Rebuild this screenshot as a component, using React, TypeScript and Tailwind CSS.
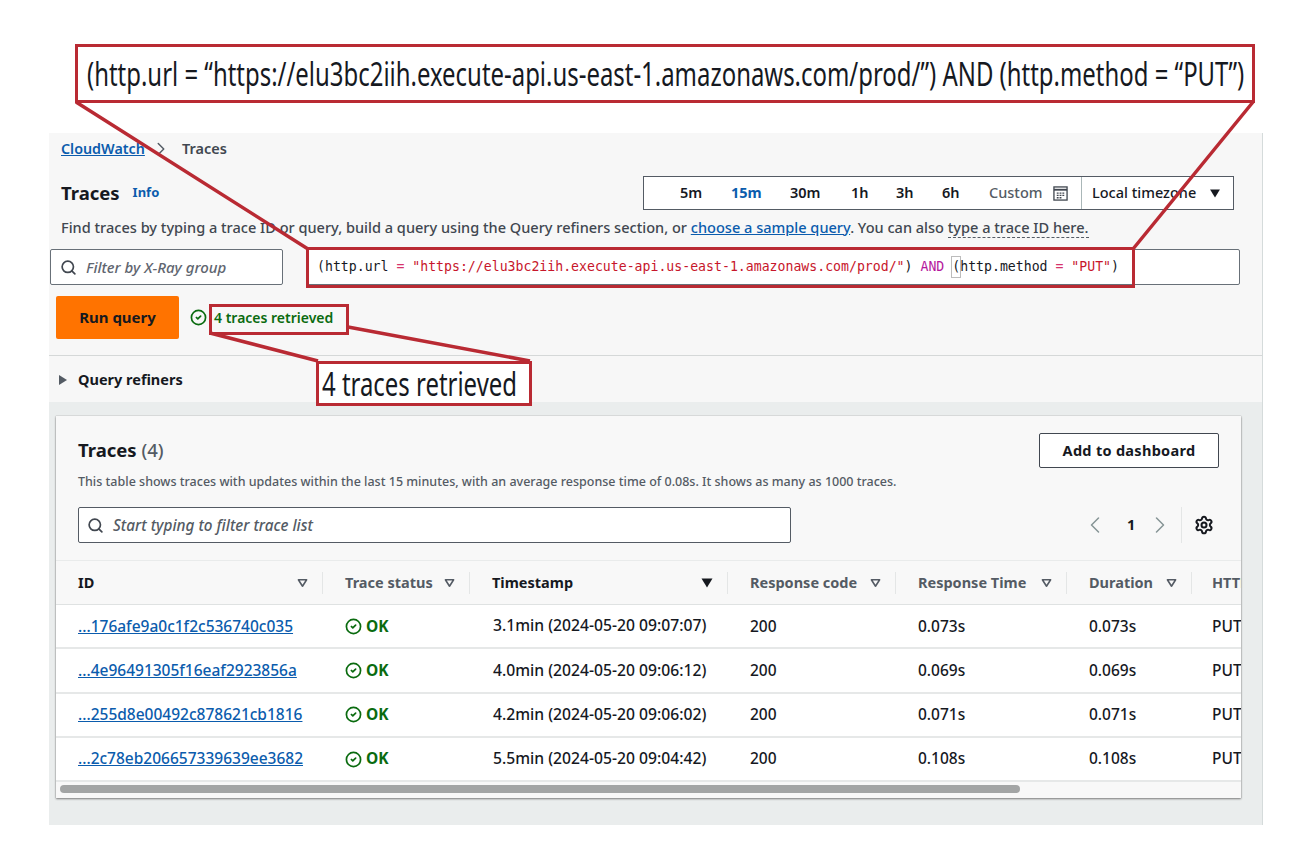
import { Search, ChevronRight, ChevronLeft, Settings, CircleCheck } from 'lucide-react'

const rows = [
  { id: '...176afe9a0c1f2c536740c035', ts: '3.1min (2024-05-20 09:07:07)', time: '0.073s' },
  { id: '...4e96491305f16eaf2923856a', ts: '4.0min (2024-05-20 09:06:12)', time: '0.069s' },
  { id: '...255d8e00492c878621cb1816', ts: '4.2min (2024-05-20 09:06:02)', time: '0.071s' },
  { id: '...2c78eb206657339639ee3682', ts: '5.5min (2024-05-20 09:04:42)', time: '0.108s' },
]

const ranges = [
  { label: '5m', w: 'w-[51px]' },
  { label: '15m', w: 'w-[59px]', active: true },
  { label: '30m', w: 'w-[61px]' },
  { label: '1h', w: 'w-[45px]' },
  { label: '3h', w: 'w-[46px]' },
  { label: '6h', w: 'w-[47px]' },
]

const cols = 'grid grid-cols-[267px_147px_258px_168px_171px_125px_1fr]'

// hollow triangle used by the sortable table headers
function SortIcon() {
  return (
    <svg viewBox="0 0 12 10" className="w-[11px] h-[10px] shrink-0 text-[#545b64]" fill="none" stroke="currentColor" strokeWidth="1.7">
      <path d="M1.5 1.5h9L6 8.5z" strokeLinejoin="round" />
    </svg>
  )
}

function Caret({ className }: { className: string }) {
  return (
    <svg viewBox="0 0 12 10" className={className} fill="currentColor">
      <path d="M0.5 0.5h11L6 9.5z" />
    </svg>
  )
}

function HeaderCell({ label, icon, dark, last }: { label: string, icon?: React.ReactNode, dark?: boolean, last?: boolean }) {
  return (
    <div className={`h-[43px] ${last ? 'pl-[20px]' : 'pl-[22px]'} pr-[15px] flex items-center justify-between relative ${dark ? 'text-[#16191f]' : 'text-[#545b64]'}`}>
      <span className="whitespace-nowrap font-bold">{label}</span>
      {icon}
      {!last && <span className="absolute right-0 top-[11px] h-[22px] w-px bg-[#e4e6e6]" />}
    </div>
  )
}

export default function App() {
  return (
    <div className="relative w-[1310px] h-[857px] bg-white overflow-hidden pt-[133px] pl-[49px] text-[14.5px] text-[#16191f] font-['Noto_Sans','Open_Sans',sans-serif]">
      <div className="w-[1214px] h-[692px] border-r border-[#d5dbdb] bg-[#f7f7f7] flex flex-col">

        {/* --- QUERY SECTION --- */}
        <section className="h-[223px] border-b border-[#d5d8d8]">
          <div className="h-8 pl-3 flex items-center font-semibold">
            <a className="text-[#0b5cad] underline w-[86px] text-[14.3px]">CloudWatch</a>
            <ChevronRight className="w-[22px] h-[22px] ml-[3px] mr-[10px] text-[#545b64]" strokeWidth={1.6} />
            <span className="text-[#414750]">Traces</span>
          </div>

          <div className="mt-[11px] h-[34px] pl-3 pr-[28px] flex justify-between items-center">
            <div className="flex items-center gap-[13px]">
              <h1 className="text-[18.5px] font-bold">Traces</h1>
              <a className="text-[#0b5cad] text-[13px] font-bold">Info</a>
            </div>
            <div className="w-[591px] h-[34px] border border-[#545b64] bg-white flex items-center font-semibold">
              <div className="w-[438px] pl-[36px] flex items-center border-r border-[#aab7b8] h-full">
                {ranges.map((r) => (
                  <span key={r.label} className={`${r.w} ${r.active ? 'text-[#0b5cad] font-bold' : ''}`}>{r.label}</span>
                ))}
                <span className="text-[#545b64] font-medium">Custom</span>
                <svg viewBox="0 0 16 16" className="w-[15px] h-[15px] ml-[10px]" fill="none" stroke="#414750" strokeWidth="1.4">
                  <rect x="1" y="1" width="14" height="14" />
                  <path d="M1 4h14" strokeWidth="2" />
                  <path d="M4 7.5h2M7 7.5h2M10 7.5h2M4 10h2M7 10h2M10 10h2M4 12.5h2M7 12.5h2" />
                </svg>
              </div>
              <div className="flex-1 pl-[10px] pr-3 flex items-center justify-between">
                <span className="font-medium whitespace-nowrap">Local timezone</span>
                <Caret className="w-[12px] h-[9px] text-[#16191f]" />
              </div>
            </div>
          </div>

          <p className="mt-[7px] h-5 pl-3 leading-5 text-[14.56px] font-medium text-[#414750] whitespace-nowrap">
            Find traces by typing a trace ID or query, build a query using the Query refiners section, or{' '}
            <a className="text-[#0b5cad] underline">choose a sample query</a>. You can also{' '}
            <span className="border-b border-dashed border-[#545b64]">type a trace ID here.</span>
          </p>

          <div className="mt-[12px] h-[36px] pl-px flex gap-[23px]">
            <div className="w-[233px] border border-[#687078] rounded-[2px] bg-white flex items-center pl-[9px] gap-[9px]">
              <Search className="w-[17px] h-[17px] text-[#414750]" strokeWidth={2.4} />
              <span className="italic text-[15px] text-[#5f6670] font-medium whitespace-nowrap">Filter by X-Ray group</span>
            </div>
            <div className="w-[934px] border border-[#687078] rounded-[2px] bg-white flex items-center pl-[10px] font-['DejaVu_Sans_Mono',monospace] text-[13.2px] whitespace-nowrap">
              <span>(http.url</span>
              <span className="text-[#d6336c] whitespace-pre"> = </span>
              <span className="text-[#c7162b]">"https://elu3bc2iih.execute-api.us-east-1.amazonaws.com/prod/"</span>
              <span className="whitespace-pre">) </span>
              <span className="text-[#b5179e]">AND</span>
              <span className="whitespace-pre"> </span>
              <span className="outline outline-1 outline-[#bcbcbc]">(</span>
              <span>http.method</span>
              <span className="text-[#d6336c] whitespace-pre"> = </span>
              <span className="text-[#c7162b]">"PUT"</span>
              <span>)</span>
            </div>
          </div>

          <div className="mt-[11px] pl-[7px] flex items-center gap-[11px]">
            <button className="w-[123px] h-[43px] bg-[#ff7300] rounded-[2px] font-bold text-[15px] text-[#16191f]">Run query</button>
            <CircleCheck className="w-[17px] h-[17px] text-[#0a6b0f]" strokeWidth={2.4} />
            <span className="ml-[-4px] text-[14px] text-[#0a6b0f] font-semibold whitespace-nowrap">4 traces retrieved</span>
          </div>
        </section>

        {/* --- REFINERS --- */}
        <div className="h-[46px] pl-[10px] pt-[2px] flex items-center gap-[11px] font-bold">
          <svg viewBox="0 0 8 10" className="w-[8px] h-[10px] text-[#545b64]" fill="currentColor"><path d="M0 0l8 5-8 5z" /></svg>
          <span>Query refiners</span>
        </div>

        {/* --- TABLE CARD --- */}
        <div className="flex-1 bg-[#eaeded] pl-[7px] pt-[14px]">
          <div className="w-[1185px] h-[382px] bg-[#f8f8f8] shadow-[0_1px_2px_rgba(0,0,0,0.45),0_0_1px_rgba(0,0,0,0.3)] overflow-hidden">
            <div className="pl-[22px] pr-[22px] pt-[17px] flex justify-between">
              <div>
                <h2 className="text-[18.5px] font-bold leading-[34px]">Traces <span className="font-medium text-[#545b64]">(4)</span></h2>
                <p className="mt-[6px] text-[12.5px] leading-[17px] text-[#545b64] font-medium whitespace-nowrap">
                  This table shows traces with updates within the last 15 minutes, with an average response time of 0.08s. It shows as many as 1000 traces.
                </p>
              </div>
              <button className="w-[180px] h-[35px] border border-[#414750] rounded-[2px] bg-white font-bold tracking-[0.3px]">Add to dashboard</button>
            </div>

            <div className="mt-[17px] pl-[22px] flex items-center">
              <div className="w-[713px] h-[36px] border border-[#545b64] rounded-[2px] bg-white flex items-center pl-[8px] gap-[9px]">
                <Search className="w-[17px] h-[17px] text-[#414750]" strokeWidth={2.4} />
                <span className="italic text-[15.3px] text-[#545b64] font-medium whitespace-nowrap">Start typing to filter trace list</span>
              </div>
              <ChevronLeft className="ml-[290px] w-7 h-7 text-[#879596]" strokeWidth={1.3} />
              <span className="ml-[18px] w-[20px] font-bold">1</span>
              <ChevronRight className="ml-[-1px] w-7 h-7 text-[#879596]" strokeWidth={1.3} />
              <span className="ml-[7px] h-[36px] w-px bg-[#e4e6e6]" />
              <Settings className="ml-[12px] w-5 h-5 text-[#16191f]" strokeWidth={2.4} />
            </div>

            <div className="mt-[17px] border-t border-[#e9ebeb] overflow-hidden">
              <div className={cols}>
                <HeaderCell label="ID" icon={<SortIcon />} dark />
                <HeaderCell label="Trace status" icon={<SortIcon />} />
                <HeaderCell label="Timestamp" icon={<Caret className="w-[12px] h-[10px] text-[#16191f]" />} dark />
                <HeaderCell label="Response code" icon={<SortIcon />} />
                <HeaderCell label="Response Time" icon={<SortIcon />} />
                <HeaderCell label="Duration" icon={<SortIcon />} />
                <HeaderCell label="HTTP method" last />
              </div>
              <div className="bg-white border-t border-[#dfe2e2]">
                {rows.map((row) => (
                  <div key={row.id} className={`${cols} h-[44.3px] items-center border-b-2 border-[#e6e8e8] text-[15.5px] font-medium`}>
                    <a className="pl-[22px] text-[#0b5cad] underline">{row.id}</a>
                    <span className="pl-[22px] flex items-center gap-[4px] text-[#0a6b0f] font-bold">
                      <CircleCheck className="w-[17px] h-[17px]" strokeWidth={2.4} /> OK
                    </span>
                    <span className="pl-[23px] text-[15.7px] whitespace-nowrap">{row.ts}</span>
                    <span className="pl-[22px]">200</span>
                    <span className="pl-[22px]">{row.time}</span>
                    <span className="pl-[22px]">{row.time}</span>
                    <span className="pl-[20px]">PUT</span>
                  </div>
                ))}
              </div>
              <div className="h-[16px] pl-[4px] pt-[3px]">
                <div className="w-[960px] h-[8px] rounded-full bg-[#a3a5a5]" />
              </div>
            </div>
          </div>
        </div>
      </div>

      {/* --- ANNOTATIONS drawn over the console --- */}
      <svg className="absolute inset-0 w-[1310px] h-[857px] pointer-events-none" fill="none" stroke="#b92a33" strokeWidth="3.5">
        <path d="M76 102L308 249M1253 102L1133 249M210 333L318 361M348 327L530 361" />
      </svg>
      <div className="absolute left-[75px] top-[44px] w-[1180px] h-[59px] border-[3px] border-[#b92a33] bg-white pl-[9px] flex items-center overflow-hidden">
        <span className="origin-left scale-x-[0.725] text-[33px] text-[#16191f] whitespace-nowrap">(http.url = “https://elu3bc2iih.execute-api.us-east-1.amazonaws.com/prod/”) AND (http.method = “PUT”)</span>
      </div>
      <div className="absolute left-[306px] top-[247px] w-[829px] h-[41px] border-[3px] border-[#b92a33]" />
      <div className="absolute left-[209px] top-[304px] w-[140px] h-[31px] border-[3px] border-[#b92a33]" />
      <div className="absolute left-[316px] top-[361px] w-[216px] h-[45px] border-[3px] border-[#b92a33] bg-white pl-[3px] flex items-center overflow-hidden">
        <span className="origin-left scale-x-[0.725] text-[33px] text-[#16191f] whitespace-nowrap">4 traces retrieved</span>
      </div>
    </div>
  )
}
